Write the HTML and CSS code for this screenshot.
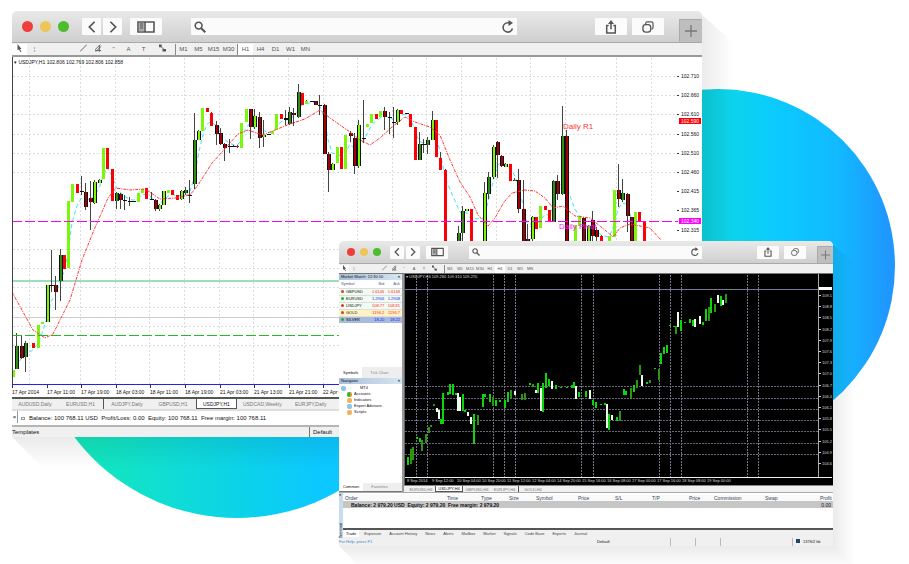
FILE: index.html
```html
<!DOCTYPE html>
<html lang="en">
<head>
    <meta charset="UTF-8">
    <meta name="viewport" content="width=device-width, initial-scale=1.0">
    <title>Trading Terminal</title>
    <link rel="stylesheet" href="styles.css">
</head>
<body>
    <svg class="icon-defs" aria-hidden="true">
        <symbol id="icon-prev" viewBox="0 0 12 16"><path d="M9 2 3 8l6 6" fill="none" stroke="currentColor" stroke-width="2"/></symbol>
        <symbol id="icon-next" viewBox="0 0 12 16"><path d="m3 2 6 6-6 6" fill="none" stroke="currentColor" stroke-width="2"/></symbol>
        <symbol id="icon-sidebar" viewBox="0 0 18 12">
            <path d="M1 1h16v10H1zM8 1v10" fill="none" stroke="currentColor" stroke-width="1.6"/>
            <path d="M2 2h5v8H2z" fill="#aaa"/><path d="M3 3h3M3 5h3M3 7h3" stroke="currentColor"/>
        </symbol>
        <symbol id="icon-search" viewBox="0 0 12 12">
            <circle cx="4.6" cy="4.6" r="3.4" fill="none" stroke="currentColor" stroke-width="1.6"/>
            <path d="m7 7 4.3 4.3" stroke="currentColor" stroke-width="2"/>
        </symbol>
        <symbol id="icon-reload" viewBox="0 0 12 14">
            <path d="M10.4 8.5a4.7 4.7 0 1 1-4.6-5.8h2" fill="none" stroke="currentColor" stroke-width="1.6"/>
            <path d="M6.5 0 11 3 6.5 6z" fill="currentColor"/>
        </symbol>
        <symbol id="icon-share" viewBox="0 0 12 15">
            <path d="M3.5 6H1.4v8h9.2V6H8.5M6 2v8" fill="none" stroke="currentColor" stroke-width="1.6"/>
            <path d="M2.8 4.2 6 0l3.2 4.2z" fill="currentColor"/>
        </symbol>
        <symbol id="icon-pages" viewBox="0 0 13 13">
            <path d="M4 3.5V3q0-2 2-2h4q2 0 2 2v3.500q0 2-1.500 2.500" fill="none" stroke="currentColor" stroke-width="1.300"/>
            <rect x="1" y="4" width="8.500" height="8" rx="3" fill="none" stroke="currentColor" stroke-width="1.400"/>
        </symbol>
        <symbol id="icon-plus" viewBox="0 0 12 12"><path d="M6 0v12M0 6h12" stroke="currentColor" stroke-width="1.300"/></symbol>
        <symbol id="icon-cursor" viewBox="0 0 6 8"><path d="m1 0 4 5H3.500L5 8H4L2.500 5.500 1 6z" fill="currentColor"/></symbol>
        <symbol id="icon-line" viewBox="0 0 8 8"><path d="m0 8 8-8" stroke="currentColor"/></symbol>
        <symbol id="icon-channel" viewBox="0 0 8 8"><path d="m0 6 6-6M1 8l6-6M0 7h7M5 1v7" stroke="currentColor"/></symbol>
        <symbol id="icon-shapes" viewBox="0 0 8 8"><path d="m1 1 5 5" stroke="currentColor"/><path d="M0 0h3v3H0zM4 5h4v3H4z" fill="currentColor"/></symbol>
    </svg>

    <main class="stage">
        <div class="disc disc-right"></div>
        <div class="disc disc-left"></div>

        <section class="window window-back">
            <header class="titlebar">
                <div class="lights"><i class="red"></i><i class="yellow"></i><i class="green"></i></div>
                <div class="nav">
                    <button aria-label="Back"><svg><use href="#icon-prev"/></svg></button>
                    <button aria-label="Forward"><svg><use href="#icon-next"/></svg></button>
                </div>
                <button class="wide" aria-label="Sidebar"><svg><use href="#icon-sidebar"/></svg></button>
                <label class="search">
                    <svg><use href="#icon-search"/></svg>
                    <input type="text" aria-label="Address">
                    <svg class="reload"><use href="#icon-reload"/></svg>
                </label>
                <div class="actions">
                    <button class="wide" aria-label="Share"><svg><use href="#icon-share"/></svg></button>
                    <button class="wide" aria-label="Pages"><svg><use href="#icon-pages"/></svg></button>
                </div>
                <button class="add" aria-label="New tab"><svg><use href="#icon-plus"/></svg></button>
            </header>

            <div class="toolbar">
                <button class="on" aria-label="Cursor"><svg><use href="#icon-cursor"/></svg></button>
                <button>¦</button>
                <div class="draw-tools">
                    <button aria-label="Line"><svg><use href="#icon-line"/></svg></button>
                    <button aria-label="Channel"><svg><use href="#icon-channel"/></svg></button>
                    <button>"</button>
                    <button>A</button>
                    <button>T</button>
                    <button aria-label="Shapes"><svg><use href="#icon-shapes"/></svg></button>
                </div>
                <div class="periods">
                    <button>M1</button><button>M5</button><button>M15</button><button>M30</button>
                </div>
                <div class="periods">
                    <button class="on">H1</button><button>H4</button><button>D1</button><button>W1</button><button>MN</button>
                </div>
            </div>

            <svg class="chart" id="chart-light" viewBox="12 57 690 340"></svg>

            <nav class="tabs">
                <button>AUDUSD,Daily</button>
                <button class="divided">EURUSD,H1</button>
                <button>AUDJPY,Daily</button>
                <button>GBPUSD,H1</button>
                <button class="active">USDJPY,H1</button>
                <button>USDCAD,Weekly</button>
                <button>EURJPY,Daily</button>
            </nav>
            <div class="balance">
                <button class="close" aria-label="Close">×</button>
                <p><i></i>Balance: 100 768.11 USD&nbsp; Profit/Loss: 0.00&nbsp; Equity: 100 768.11&nbsp; Free margin: 100 768.11</p>
            </div>
            <footer class="status"><span>Templates</span><span class="profile">Default</span></footer>
        </section>

        <section class="window window-front">
            <header class="titlebar">
                <div class="lights"><i class="red"></i><i class="yellow"></i><i class="green"></i></div>
                <div class="nav">
                    <button aria-label="Back"><svg><use href="#icon-prev"/></svg></button>
                    <button aria-label="Forward"><svg><use href="#icon-next"/></svg></button>
                </div>
                <button class="wide" aria-label="Sidebar"><svg><use href="#icon-sidebar"/></svg></button>
                <label class="search">
                    <svg><use href="#icon-search"/></svg>
                    <input type="text" aria-label="Address">
                    <svg class="reload"><use href="#icon-reload"/></svg>
                </label>
                <div class="actions">
                    <button class="wide" aria-label="Share"><svg><use href="#icon-share"/></svg></button>
                    <button class="wide" aria-label="Pages"><svg><use href="#icon-pages"/></svg></button>
                </div>
                <button class="add" aria-label="New tab"><svg><use href="#icon-plus"/></svg></button>
            </header>

            <div class="toolbar">
                <button class="on" aria-label="Cursor"><svg><use href="#icon-cursor"/></svg></button>
                <button>|</button>
                <div class="draw-tools">
                    <button aria-label="Line"><svg><use href="#icon-line"/></svg></button>
                    <button aria-label="Channel"><svg><use href="#icon-channel"/></svg></button>
                    <button>"</button>
                    <button>A</button>
                    <button>T</button>
                    <button aria-label="Shapes"><svg><use href="#icon-shapes"/></svg></button>
                </div>
                <div class="periods">
                    <button>M1</button><button>M5</button><button>M15</button><button>M30</button>
                    <button>H1</button><button class="on">H4</button><button>D1</button><button>W1</button><button>MN</button>
                </div>
            </div>

            <div class="workspace">
                <aside class="side">
                    <h2>Market Watch: 12:30:10<b>×</b></h2>
                    <table class="quotes">
                        <thead><tr><th>Symbol</th><th>Bid</th><th>Ask</th></tr></thead>
                        <tbody>
                            <tr class="down"><td>GBPUSD</td><td>1.6146</td><td>1.6148</td></tr>
                            <tr class="up"><td>EURUSD</td><td>1.2906</td><td>1.2908</td></tr>
                            <tr class="down"><td>USDJPY</td><td>108.77</td><td>108.81</td></tr>
                            <tr class="down gold"><td>GOLD</td><td>1196.2</td><td>1196.7</td></tr>
                            <tr class="up selected"><td>SILVER</td><td>18.20</td><td>18.22</td></tr>
                        </tbody>
                    </table>
                    <nav class="side-tabs"><button class="active">Symbols</button><button>Tick Chart</button></nav>
                    <h2>Navigator<b>×</b></h2>
                    <ul class="tree">
                        <li class="root"><i class="blue"></i>MT4</li>
                        <li><i class="lime"></i>Accounts</li>
                        <li><i class="orange"></i>Indicators</li>
                        <li><i class="blue"></i>Expert Advisors</li>
                        <li><i class="orange"></i>Scripts</li>
                    </ul>
                    <nav class="side-tabs bottom"><button class="active">Common</button><button>Favorites</button></nav>
                </aside>
                <div class="chart-pane">
                    <svg class="chart" id="chart-dark" viewBox="404 274 429 211"></svg>
                    <nav class="tabs">
                        <button>EURUSD,H4</button>
                        <button class="active">USDJPY,H4</button>
                        <button>GBPUSD,H4</button>
                        <button class="divided">EURJPY,H4</button>
                        <button>GOLD,H4</button>
                    </nav>
                </div>
            </div>

            <div class="terminal">
                <div class="terminal-label"><b>×</b><span>Terminal</span></div>
                <div class="terminal-body">
                    <table class="orders">
                        <thead>
                            <tr><th>Order</th><th>Time</th><th>Type</th><th>Size</th><th>Symbol</th><th>Price</th><th>S/L</th><th>T/P</th><th>Price</th><th>Commission</th><th>Swap</th><th>Profit</th></tr>
                        </thead>
                        <tbody>
                            <tr><td colspan="11">Balance: 2 979.20 USD&nbsp; Equity: 2 979.20&nbsp; Free margin: 2 979.20</td><td>0.00</td></tr>
                        </tbody>
                    </table>
                    <nav class="terminal-tabs">
                        <button class="active">Trade</button><button>Exposure</button><button>Account History</button><button>News</button><button>Alerts</button><button>Mailbox</button><button>Market</button><button>Signals</button><button>Code Base</button><button>Experts</button><button>Journal</button>
                    </nav>
                </div>
            </div>
            <footer class="status">
                <a href="#help">For Help, press F1</a>
                <span>Default</span>
                <span></span><span></span><span></span>
                <span class="traffic"><i></i>1376/2 kb</span>
            </footer>
        </section>
    </main>
    <script src="charts.js"></script>
</body>
</html>
```
FILE: styles.css
```css
* {
    margin: 0;
    padding: 0;
    box-sizing: border-box;
}

body {
    background: #fff;
    font-family: "Liberation Sans", Arial, sans-serif;
    color: #111;
}

button {
    border: none;
    background: none;
    font: inherit;
    color: inherit;
    white-space: nowrap;
    cursor: pointer;
}

.icon-defs {
    position: absolute;
    width: 0;
    height: 0;
}

.stage {
    position: relative;
    min-height: 564px;
    overflow: hidden;
}

.disc {
    position: absolute;
    border-radius: 50%;
}

.disc-right {
    top: 89px;
    right: 14px;
    width: 354px;
    height: 354px;
    background: linear-gradient(90deg, #0ccfdb 44%, #0cd4ec 54%, #0cc9ff 68%, #12b9ff 84%, #1f97ff 98%);
}

.disc-left {
    top: 110px;
    left: 33px;
    width: 408px;
    height: 408px;
    background: linear-gradient(90deg, #12e6bd 14%, #10dfd0 30%, #0cd2ea 52%, #0cc8ff 70%);
}

/* windows */
.window {
    position: absolute;
    display: flex;
    flex-direction: column;
    background: #fff;
    border-radius: 5px 5px 0 0;
}

.window-back {
    --depth: 32px;
    top: 11px;
    left: 12px;
    right: 207px;
    font-size: 6px;
}

.window-front {
    --depth: 22px;
    top: 241px;
    left: 339px;
    right: 76px;
    font-size: 5px;
}

.window::before,
.window::after {
    content: "";
    position: absolute;
}

.window::before {
    top: 0;
    left: 100%;
    bottom: calc(0px - var(--depth));
    width: var(--depth);
    background: linear-gradient(90deg, rgba(0, 0, 0, 0.08), rgba(0, 0, 0, 0));
    clip-path: polygon(0 4px, 100% var(--depth), 100% 100%, 0 calc(100% - var(--depth)));
}

.window::after {
    top: 100%;
    left: 0;
    right: calc(0px - var(--depth));
    height: var(--depth);
    background: linear-gradient(180deg, rgba(0, 0, 0, 0.08), rgba(0, 0, 0, 0));
    clip-path: polygon(0 0, calc(100% - var(--depth)) 0, 100% 100%, var(--depth) 100%);
}

/* title bar */
.titlebar {
    display: flex;
    align-items: center;
    height: 32px;
    padding-left: 10px;
    border-bottom: 1px solid #a8a8a8;
    border-radius: 5px 5px 0 0;
    background: linear-gradient(#e9e9e9, #cfcfcf);
    color: #555;
}

.titlebar svg {
    display: block;
    width: 12px;
    height: 14px;
}

.lights {
    display: flex;
    gap: 7px;
    margin-right: 13px;
}

.lights i {
    width: 11px;
    height: 11px;
    border-radius: 50%;
}

.lights .red { background: #ee3e3b; }
.lights .yellow { background: #edc65a; }
.lights .green { background: #4bbd2e; }

.nav {
    display: flex;
    gap: 2px;
    margin-right: 8px;
}

.titlebar button {
    display: flex;
    align-items: center;
    justify-content: center;
    width: 19px;
    height: 17px;
    border-radius: 1px;
    background: #fbfbfb;
}

.titlebar .wide {
    width: 32px;
}

.titlebar > .wide svg {
    width: 18px;
}

.search {
    display: flex;
    flex: 1;
    align-items: center;
    height: 17px;
    margin: 0 78px 0 29px;
    padding: 0 3px;
    background: #fbfbfb;
}

.search input {
    flex: 1;
    min-width: 0;
    height: 12px;
    border: none;
    outline: none;
    background: none;
}

.actions {
    display: flex;
    gap: 5px;
    margin-right: 15px;
}

.titlebar .add {
    align-self: flex-end;
    width: 23px;
    height: 23px;
    border: 1px solid #aaa;
    border-width: 1px 0 0 1px;
    background: #bebebe;
    color: #777;
}

.window-front .titlebar {
    height: 23px;
    padding-left: 8px;
}

.window-front .titlebar svg {
    width: 8px;
    height: 10px;
}

.window-front .lights {
    gap: 5px;
    margin-right: 9px;
}

.window-front .lights i {
    width: 8px;
    height: 8px;
}

.window-front .nav {
    margin-right: 6px;
}

.window-front .titlebar button {
    width: 14px;
    height: 13px;
}

.window-front .titlebar .wide {
    width: 22px;
}

.window-front .titlebar > .wide svg {
    width: 13px;
}

.window-front .search {
    height: 13px;
    margin: 0 55px 0 21px;
}

.window-front .actions {
    margin-right: 11px;
}

.window-front .titlebar .add {
    width: 16px;
    height: 17px;
}

.window-front .titlebar .add svg {
    width: 9px;
}

/* toolbar */
.toolbar {
    display: flex;
    align-items: center;
    height: 14px;
    border-bottom: 2px solid #999;
    background: #f0f0f0;
    color: #555;
    line-height: 8px;
}

.toolbar button {
    width: 15px;
    height: 11px;
}

.toolbar .on {
    background: #fff;
}

.toolbar svg {
    width: 7px;
    height: 8px;
}

.draw-tools {
    display: flex;
    flex: 0 0 99px;
    margin-left: 34px;
}

.periods {
    display: flex;
    border-left: 1px solid #888;
}

.periods + .periods {
    margin-left: 1px;
}

.window-back .draw-tools button:last-child {
    width: 22px;
}

.window-front .toolbar {
    height: 10px;
    border-bottom: 1px solid #777;
    font-size: 4px;
    line-height: 6px;
}

.window-front .toolbar button {
    width: 10px;
    height: 8px;
}

.window-front .toolbar svg {
    width: 5px;
    height: 6px;
}

.window-front .draw-tools {
    flex-basis: 65px;
    margin-left: 20px;
}

/* charts */
.chart {
    display: block;
    width: 100%;
    height: auto;
    background: #fff;
}

#chart-dark {
    background: #000;
}

.chart text {
    font-size: 5px;
}

.chart .level {
    font-size: 8px;
}

#chart-dark text {
    font-size: 4px;
    fill: #ddd;
}

.tabs {
    display: flex;
    height: 12px;
    border-top: 2px solid #555;
    background: #f0f0f0;
    color: #777;
    font-size: 5px;
    line-height: 8px;
}

.tabs button {
    min-width: 46px;
    padding: 0 6px;
}

.tabs .divided {
    border-right: 1px solid #555;
}

.tabs .active {
    min-width: 40px;
    border: 1px solid #555;
    border-top: none;
    background: #fff;
    color: #111;
}

.window-front .tabs {
    height: 7px;
    padding-left: 3px;
    border-top: 1px solid #888;
    font-size: 4px;
    line-height: 5px;
}

.window-front .tabs button {
    min-width: 28px;
    padding: 0 2px;
}

.balance {
    display: flex;
    align-items: center;
    height: 18px;
    border-top: 2px solid #ddd;
    border-bottom: 2px solid #b5b5b5;
}

.balance .close {
    align-self: flex-start;
    width: 6px;
    height: 12px;
    border-right: 1px solid #999;
    line-height: 6px;
}

.balance p {
    display: flex;
    align-items: center;
    padding-left: 3px;
}

.balance i {
    width: 4px;
    height: 3px;
    margin-right: 4px;
    border: 1px solid #999;
}

.status {
    display: flex;
    justify-content: space-between;
    height: 10px;
    background: #f0f0f0;
    line-height: 10px;
}

.status .profile {
    width: 393px;
    padding-left: 3px;
    border-left: 1px solid #777;
}

/* market watch and navigator */
.workspace {
    display: flex;
    min-height: 218px;
}

.side {
    display: flex;
    flex-direction: column;
    flex: 0 0 65px;
    border-right: 2px solid #999;
    overflow: hidden;
    font-size: 4px;
}

.side h2 {
    display: flex;
    justify-content: space-between;
    height: 6px;
    padding: 0 2px;
    background: linear-gradient(90deg, #a9bfd8, #d6e5f2);
    font-size: 4px;
    font-weight: normal;
    line-height: 6px;
}

.quotes {
    width: 100%;
    border-collapse: collapse;
    line-height: 6px;
}

.quotes th {
    height: 8px;
    color: #468;
    font-weight: normal;
    text-align: right;
}

.quotes td {
    height: 7px;
    border-top: 1px solid #ddd;
    background: #f2fbf2;
    text-align: right;
}

.quotes th:first-child,
.quotes td:first-child {
    padding-left: 2px;
    text-align: left;
}

.quotes th:last-child,
.quotes td:last-child {
    padding-right: 2px;
}

.quotes td:first-child::before {
    content: "";
    display: inline-block;
    width: 3px;
    height: 3px;
    margin-right: 2px;
    border-radius: 50%;
    background: #d3402a;
}

.quotes .up td:first-child::before { background: #2aa82a; }
.quotes .down td + td { color: #f22; }
.quotes .up td + td { color: #12f; }
.quotes .gold td { background: #fff3c4; }
.quotes .selected td { background: #a9bbdc; }

.side-tabs {
    display: flex;
    gap: 4px;
    height: 11px;
    margin-top: auto;
    background: #eee;
    color: #888;
}

.side-tabs button {
    padding: 0 4px;
    line-height: 8px;
}

.side-tabs .active {
    background: #fff;
    color: #111;
}

.side-tabs.bottom {
    height: 9px;
    margin-top: 0;
    border-bottom: 1px solid #777;
}

.tree {
    height: 99px;
    padding: 1px 2px;
    list-style: none;
    line-height: 6px;
}

.tree li {
    display: flex;
    align-items: center;
    gap: 2px;
    padding-left: 6px;
}

.tree .root {
    gap: 14px;
    padding-left: 0;
}

.tree i {
    width: 5px;
    height: 5px;
    border-radius: 2px;
}

.tree .blue { background: #8fc4e8; }
.tree .lime { background: linear-gradient(90deg, #2eb82e 50%, #e8912a 50%); }
.tree .orange { background: #efb45a; }

.chart-pane {
    flex: 1;
    min-width: 0;
}

/* terminal */
.terminal {
    display: flex;
    height: 46px;
    border-top: 1px solid #aaa;
    background: #f0f0f0;
}

.terminal-label {
    display: flex;
    flex: 0 0 4px;
    flex-direction: column;
    justify-content: space-between;
    background: #c9dced;
    font-size: 4px;
    line-height: 4px;
}

.terminal-label span {
    writing-mode: vertical-rl;
    transform: rotate(180deg);
}

.terminal-body {
    display: flex;
    flex: 1;
    flex-direction: column;
    min-width: 0;
    padding-top: 1px;
    background: #fff;
}

.orders {
    width: 100%;
    table-layout: fixed;
    border-collapse: collapse;
    line-height: 6px;
    text-align: left;
}

.orders th {
    height: 7px;
    padding-left: 2px;
    background: #fafafa;
    color: #345;
    font-weight: normal;
}

.orders th:nth-child(1) { width: 102px; }
.orders th:nth-child(2) { width: 34px; }
.orders th:nth-child(3) { width: 28px; }
.orders th:nth-child(4) { width: 27px; }
.orders th:nth-child(5) { width: 42px; }
.orders th:nth-child(6),
.orders th:nth-child(7),
.orders th:nth-child(8) { width: 37px; }
.orders th:nth-child(9) { width: 25px; }
.orders th:nth-child(10) { width: 51px; }
.orders th:nth-child(11) { width: 55px; }

.orders td {
    height: 7px;
    padding-left: 8px;
    background: #c6c6c6;
    font-weight: bold;
}

.orders td:last-child {
    padding: 0 2px 0 0;
    font-weight: normal;
    text-align: right;
}

.terminal-tabs {
    display: flex;
    gap: 2px;
    height: 10px;
    margin-top: auto;
    border-top: 2px solid #555;
    background: #f0f0f0;
    color: #444;
    font-size: 4px;
}

.terminal-tabs button {
    height: 7px;
    padding: 0 3px;
    line-height: 6px;
}

.terminal-tabs .active {
    background: #fff;
    color: #111;
}

.window-front .status {
    display: grid;
    grid-template-columns: 258px 73px 25px 25px 72px 1fr;
    height: 8px;
    font-size: 4px;
    line-height: 8px;
}

.window-front .status a {
    color: #3a8cc4;
    text-decoration: none;
}

.window-front .status span + span {
    border-left: 1px solid #bbb;
}

.traffic {
    padding-left: 3px;
}

.traffic i {
    display: inline-block;
    width: 4px;
    height: 4px;
    margin-right: 3px;
    background: #246;
}
```
FILE: charts.js
```js
const NS = 'http://www.w3.org/2000/svg';

function add(svg, name, attrs, text) {
    const el = document.createElementNS(NS, name);
    for (const key in attrs) el.setAttribute(key, attrs[key]);
    if (text) el.textContent = text;
    svg.appendChild(el);
    return el;
}

function line(svg, x1, y1, x2, y2, stroke, width, dash) {
    add(svg, 'path', {
        d: `M${x1} ${y1}L${x2} ${y2}`, stroke, 'stroke-width': width || 1,
        'stroke-dasharray': dash || 'none', fill: 'none'
    });
}

// x, high, body top, body bottom, low, kind
// L lime, R red, G framed lime, g framed green, D framed dark red, K doji
const usdjpy = `13 370 370 377 377 L;16 333 346 369 369 g;21 336 346 358 359 D;25 341 343 357 372 g;33 343 343 348 348 R;
38 325 325 348 348 L;42 322 322 324 324 L;47 285 285 322 322 G;51 250 285 286 292 K;55 276 285 292 310 D;60 249 255 281 301 g;
64 255 255 269 269 R;68 201 201 268 268 L;72 184 184 202 202 L;77 184 184 193 193 R;81 176 191 192 195 K;85 183 192 207 210 D;
90 181 198 202 230 D;94 180 182 203 204 G;99 179 180 183 183 G;103 148 148 179 179 L;107 148 148 169 169 R;112 169 169 201 201 R;
116 192 193 201 209 g;120 193 194 200 209 D;124 195 200 201 210 K;129 197 201 202 206 K;133 201 201 202 202 K;138 193 193 202 202 L;
142 189 189 193 193 L;146 188 188 199 199 R;151 192 199 200 200 K;155 199 200 209 211 D;159 204 205 209 211 G;163 191 191 205 205 G;
168 190 190 193 193 L;172 190 190 195 195 R;177 195 195 200 200 R;181 190 191 199 200 G;185 187 190 193 195 g;189 180 195 196 203 K;
194 113 140 184 189 g;198 130 131 140 140 G;202 108 108 131 131 L;207 108 108 112 112 R;211 112 113 126 126 R;216 121 125 134 145 D;
220 128 133 144 145 D;224 143 144 148 161 D;229 139 146 147 153 K;233 145 146 147 147 K;237 145 146 147 148 R;241 123 123 148 148 L;
246 109 109 122 122 L;250 109 109 127 139 D;254 109 116 127 129 G;259 112 117 138 148 D;263 120 135 137 147 G;268 134 134 135 135 K;
272 131 131 134 134 L;276 114 114 130 130 L;281 114 114 119 119 R;285 110 118 120 125 K;289 107 112 124 125 g;293 108 113 115 126 D;
298 84 92 117 118 g;302 93 93 105 105 R;306 100 101 104 104 L;311 101 101 102 102 K;315 101 101 105 105 D;319 95 105 106 115 K;
324 104 105 154 154 D;328 152 154 170 192 D;332 163 164 170 170 G;337 147 147 163 163 L;341 147 147 169 169 R;345 135 135 169 169 L;
350 131 133 136 142 D;354 133 138 166 174 D;358 120 125 166 168 G;363 100 138 139 143 K;367 124 124 127 127 L;371 114 114 123 123 L;
376 114 114 119 119 R;380 111 111 117 117 L;384 107 111 117 130 D;389 112 117 118 134 K;393 107 122 123 138 K;397 109 110 122 125 G;
401 110 110 114 114 R;406 113 113 114 114 K;410 114 114 127 127 R;415 127 127 160 160 R;419 132 144 160 160 g;423 139 144 145 153 K;
427 137 140 145 154 g;432 111 120 140 140 G;436 120 120 157 157 R;440 152 158 170 170 R;445 169 170 241 241 R;458 226 233 242 242 g;
462 206 211 233 242 g;466 209 209 211 211 G;471 209 209 242 242 R;484 182 193 242 242 G;488 172 177 194 199 g;493 145 147 177 179 G;
497 141 142 155 178 D;501 155 156 166 167 D;505 163 164 167 167 G;510 164 164 181 181 R;514 178 180 181 181 g;518 169 180 209 213 D;
523 180 209 242 242 D;527 224 239 242 242 D;532 216 217 239 242 G;536 217 217 229 229 R;540 206 206 228 228 L;545 206 206 210 210 R;
549 210 210 222 222 R;553 180 181 222 222 g;557 175 181 194 200 D;562 106 136 194 195 g;566 130 136 242 242 D;575 225 225 242 242 L;
579 216 216 226 226 L;583 217 218 242 242 D;588 225 226 242 242 G;592 211 220 236 242 D;596 227 230 237 242 D;601 235 236 242 242 R;
609 236 236 242 242 L;614 190 190 237 237 L;618 164 190 199 207 D;622 179 193 200 202 g;627 193 194 216 232 D;631 217 217 242 242 D;
635 212 212 242 242 L;639 212 212 221 221 R;644 221 221 242 242 R`;

const average = [[12, 292], [33, 330], [45, 338], [53, 334], [70, 300], [82, 260], [94, 230], [108, 198], [116, 188],
    [130, 190], [145, 189], [160, 199], [175, 198], [190, 195], [198, 185], [212, 163], [222, 152], [238, 134], [248, 130],
    [262, 135], [275, 130], [290, 124], [305, 119], [320, 110], [330, 118], [350, 132], [360, 140], [370, 145], [380, 138],
    [392, 127], [405, 117], [415, 122], [430, 127], [440, 135], [450, 160], [460, 182], [470, 197], [478, 215], [488, 226],
    [495, 218], [504, 202], [512, 193], [525, 190], [535, 191], [545, 198], [553, 208], [563, 206], [575, 216], [590, 218],
    [605, 230], [613, 237], [620, 228], [630, 224], [650, 228], [661, 240]];

function drawLight() {
    const svg = document.getElementById('chart-light');
    [30, 81, 116, 150, 185, 220, 254, 289, 324, 358, 393, 427, 462, 497, 531, 566, 617, 652].forEach(x =>
        line(svg, x - 0.5, 58, x - 0.5, 384, '#ddd', 1, '2 2'));
    [76, 95, 114, 134, 153, 172, 249, 268, 287, 307, 326, 345].forEach(y =>
        line(svg, 13, y + 0.5, 678, y + 0.5, '#ddd', 1, '2 2'));
    line(svg, 13, 317.5, 678, 317.5, '#ccc');
    line(svg, 13, 281, 678, 281, '#3cb97a', 1);

    const candles = usdjpy.split(';').map(row => row.trim().split(' '));

    // fast average follows the candle bodies
    let fast = null;
    const points = candles.map(c => {
        const mid = (+c[2] + +c[3]) / 2;
        fast = fast === null ? mid : fast * 0.5 + mid * 0.5;
        return c[0] + ' ' + fast;
    });
    add(svg, 'polyline', { points: points.join(' '), fill: 'none', stroke: '#3fe6f5', 'stroke-dasharray': '4 3' });

    const fills = { L: '#7cf70c', R: '#fb0007', G: '#7cf70c', g: '#2f8d14', D: '#a00008', K: '#111' };
    candles.forEach(([x, high, top, bottom, low, kind]) => {
        x = +x;
        if (high !== top || low !== bottom) line(svg, x + 0.5, high, x + 0.5, low, '#444', 1);
        if ('GgD'.includes(kind)) {
            add(svg, 'rect', { x: x - 1, y: top, width: 4, height: bottom - top, fill: '#111' });
            add(svg, 'rect', { x, y: top, width: 2, height: bottom - top, fill: fills[kind] });
        } else if (kind === 'K') {
            add(svg, 'rect', { x: x - 1, y: top, width: 4, height: bottom - top, fill: fills.K });
        } else {
            add(svg, 'rect', { x: x - 1, y: top, width: 3, height: bottom - top, fill: fills[kind] });
        }
    });

    add(svg, 'polyline', { points: average.join(' '), fill: 'none', stroke: '#f33', 'stroke-dasharray': '3 1 1 1' });
    for (let x = 12; x < 678; x += 13) {
        add(svg, 'rect', { x, y: 221, width: Math.min(10, 678 - x), height: 1, fill: '#ff00ff' });
        add(svg, 'rect', { x, y: 335, width: Math.min(10, 678 - x), height: 1, fill: '#22bb22' });
    }
    add(svg, 'text', { x: 563, y: 129, fill: '#f33', class: 'level' }, 'Daily R1');
    add(svg, 'text', { x: 559, y: 229, fill: '#f01cf0', class: 'level' }, 'Daily Pivot');
    add(svg, 'text', { x: 14, y: 64, fill: '#111' }, '▾ USDJPY,H1  102.806 102.769 102.806 102.858');

    const prices = ['102.710', '102.660', '102.610', '102.560', '102.510', '102.460', '102.415', '102.365', '102.315'];
    [76, 95, 114, 134, 153, 172, 191, 210, 230].forEach((y, i) => {
        line(svg, 677, y + 0.5, 679, y + 0.5, '#333');
        add(svg, 'text', { x: 681, y: y + 2, fill: '#111' }, prices[i]);
    });
    [[118, '#fb0007', '102.590'], [218, '#ff00ff', '102.340']].forEach(([y, fill, label]) => {
        add(svg, 'rect', { x: 679, y, width: 22, height: 6, fill });
        add(svg, 'text', { x: 681, y: y + 5, fill: '#fff' }, label);
    });

    line(svg, 12.5, 57, 12.5, 386, '#444');
    line(svg, 12, 384.5, 678, 384.5, '#2323ee');
    ['17 Apr 2014', '17 Apr 11:00', '17 Apr 19:00', '18 Apr 03:00', '18 Apr 11:00', '18 Apr 19:00',
        '21 Apr 03:00', '21 Apr 13:00', '21 Apr 21:00', '22 Apr 05:00'].forEach((label, i) => {
        const x = 12 + Math.round(i * 34.6);
        line(svg, x + 0.5, 385, x + 0.5, 388, '#333');
        add(svg, 'text', { x, y: 394, fill: '#111' }, label);
    });
}

// x, top, bottom, colour: g green, d dark green, w white
const session = `408 457 465 g;411 449 464 d;413 447 460 d;417 437 439 g;420 438 442 g;422 440 451 d;426 434 443 d;429 427 433 d;
431 425 427 d;434 404 406 d;437 408 412 w;439 410 419 w;441 419 424 g;443 393 424 g;448 392 395 g;450 384 394 g;453 384 395 g;
456 393 395 g;458 393 411 w;460 397 411 w;463 394 411 g;465 410 412 g;468 412 416 w;471 417 424 w;474 414 444 g;478 415 425 d;
483 394 407 g;485 394 397 g;490 394 402 g;493 397 406 d;496 400 406 g;500 400 402 g;505 400 408 g;508 392 402 g;511 390 398 d;
515 391 395 w;522 394 400 d;525 393 400 d;530 383 385 g;533 384 387 d;536 390 393 w;538 383 393 g;541 388 411 w;543 383 412 g;
546 373 388 g;549 379 386 g;552 381 389 w;556 385 389 g;561 387 388 g;567 387 388 g;572 385 388 g;574 382 388 g;576 386 399 w;
579 392 397 g;586 391 397 g;590 390 399 w;593 400 405 g;596 402 408 g;601 404 405 g;605 403 405 g;607 404 428 w;609 414 430 g;
612 415 420 w;617 417 421 g;620 411 421 d;624 389 395 g;626 391 395 g;631 388 399 d;634 385 392 g;637 380 388 d;640 365 375 d;
642 375 386 w;647 382 384 g;650 380 383 d;655 368 369 g;659 369 380 d;661 353 364 g;664 347 354 g;667 345 353 g;670 325 326 g;
674 326 327 g;676 326 334 d;678 312 327 w;681 320 331 g;685 322 323 g;690 319 323 g;693 320 326 g;695 319 327 w;700 316 324 w;
703 322 325 g;706 309 321 g;709 307 321 d;711 298 313 g;715 304 312 d;718 295 303 w;721 296 306 g;723 300 305 w;726 294 303 d;731 289 290 g`;

function drawDark() {
    const svg = document.getElementById('chart-dark');
    [416, 427, 493, 504, 515, 581, 593, 659, 670, 681, 747, 758].forEach(x =>
        line(svg, x + 0.5, 275, x + 0.5, 477, '#77778c', 1, '2 1'));
    [386, 398, 409, 420, 431, 443, 454].forEach(y =>
        line(svg, 405, y + 0.5, 818, y + 0.5, '#66667a', 1, '2 1'));
    line(svg, 405, 289.5, 818, 289.5, '#77779c');
    line(svg, 404.5, 274, 404.5, 485, '#666');
    line(svg, 818.5, 274, 818.5, 478, '#aaa');
    line(svg, 405, 477.5, 832, 477.5, '#eee');

    const fills = { g: '#0bd60b', d: '#2a9612', w: '#eaffe6' };
    session.split(';').forEach(row => {
        const [x, top, bottom, kind] = row.trim().split(' ');
        add(svg, 'rect', { x: x - 1, y: top, width: 2, height: bottom - top, fill: fills[kind] });
    });

    add(svg, 'text', { x: 406, y: 278 }, '▾ USDJPY,H4  109.280 109.310 109.270');
    add(svg, 'rect', { x: 819, y: 287, width: 13, height: 3, fill: '#fff' });
    for (let i = 0; i < 16; i++) {
        const y = 297 + Math.round(i * 11.2);
        line(svg, 819, y - 1.5, 821, y - 1.5, '#ccc');
        add(svg, 'text', { x: 822, y }, (109.1 - i * 0.3).toFixed(1));
    }
    ['8 Sep 2014', '9 Sep 12:00', '10 Sep 04:00', '10 Sep 20:00', '11 Sep 12:00', '12 Sep 04:00', '14 Sep 20:00',
        '15 Sep 16:00', '16 Sep 08:00', '17 Sep 00:00', '17 Sep 16:00', '18 Sep 08:00', '19 Sep 00:00'].forEach((label, i) => {
        add(svg, 'text', { x: 407 + i * 25, y: 482 }, label);
    });
}

drawLight();
drawDark();
```
